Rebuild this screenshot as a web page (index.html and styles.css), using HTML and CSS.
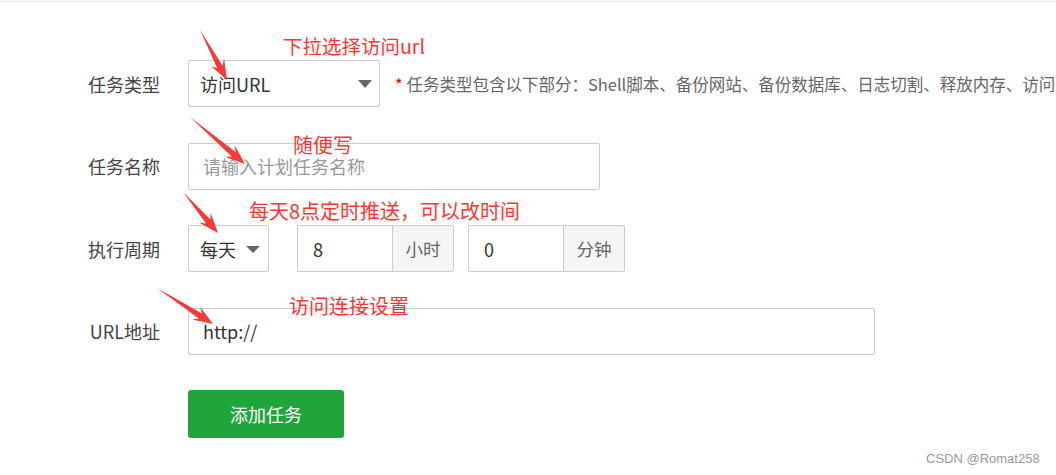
FILE: index.html
```html
<!DOCTYPE html>
<html lang="zh-CN">
<head>
<meta charset="utf-8">
<title>添加计划任务</title>
<link rel="stylesheet" href="styles.css">
</head>
<body>
<div class="topline"></div>
<div class="form">
  <div class="row">
    <label class="lbl">任务类型</label>
    <div class="select w-type"><span>访问URL</span><i class="caret"></i></div>
    <span class="hint"><em>*</em> 任务类型包含以下部分：Shell脚本、备份网站、备份数据库、日志切割、释放内存、访问</span>
  </div>
  <div class="row">
    <label class="lbl">任务名称</label>
    <input class="text w-name" type="text" placeholder="请输入计划任务名称">
  </div>
  <div class="row">
    <label class="lbl">执行周期</label>
    <div class="select w-cycle"><span>每天</span><i class="caret small"></i></div>
    <div class="ig first"><input class="num" type="text" value="8"><span class="addon">小时</span></div>
    <div class="ig"><input class="num" type="text" value="0"><span class="addon">分钟</span></div>
  </div>
  <div class="row">
    <label class="lbl">URL地址</label>
    <input class="text w-url" type="text" value="http://">
  </div>
  <div class="row">
    <span class="lbl"></span>
    <button class="btn" type="button">添加任务</button>
  </div>
</div>

<svg class="arrows" width="1056" height="475" viewBox="0 0 1056 475">
  <polygon points="200,30 217.2,68.2 210.9,66.0 227,80 224.1,58.8 222.5,65.4"/>
  <polygon points="190,117 231.7,156.5 224.9,156.7 245,164 234.7,145.3 235.6,152.0"/>
  <polygon points="183,192 206.0,223.5 199.3,222.7 218,233 210.7,212.9 210.5,219.6"/>
  <polygon points="157,288 198.8,318.4 192.1,319.5 213,324 200.2,306.9 202.0,313.4"/>
</svg>
<div class="note n1">下拉选择访问url</div>
<div class="note n2">随便写</div>
<div class="note n3">每天8点定时推送，可以改时间</div>
<div class="note n4">访问连接设置</div>

<div class="wm">CSDN @Romat258</div>
</body>
</html>
```
FILE: styles.css
```css
html, body {
  margin: 0;
  padding: 0;
}
body {
  position: relative;
  width: 1056px;
  height: 475px;
  overflow: hidden;
  background: #fff;
  font-family: "Noto Sans CJK SC", "Microsoft YaHei", sans-serif;
  color: #333;
}
.topline {
  height: 1px;
  margin-top: 1px;
  background: #e8e8e8;
}
.form {
  padding-top: 58px;
}
.row {
  display: flex;
  align-items: center;
  height: 47px;
  margin-bottom: 35.5px;
  white-space: nowrap;
}
.lbl {
  flex: none;
  box-sizing: border-box;
  width: 188px;
  padding-right: 28px;
  text-align: right;
  font-size: 18px;
  line-height: 24px;
  color: #444;
}
.select {
  flex: none;
  box-sizing: border-box;
  height: 47px;
  display: flex;
  align-items: center;
  justify-content: space-between;
  border: 1px solid #ccc;
  border-radius: 2px;
  padding: 0 7px 0 11px;
  font-size: 18px;
  color: #333;
}
.w-type { width: 192px; }
.w-cycle { width: 81px; padding-right: 8px; }
.caret {
  width: 0;
  height: 0;
  border-left: 7.5px solid transparent;
  border-right: 7.5px solid transparent;
  border-top: 8px solid #666;
}
.caret.small {
  border-top-width: 7px;
  margin-top: 2px;
}
.hint {
  flex: none;
  margin-left: 15px;
  font-size: 16.5px;
  color: #666;
}
.hint em {
  font-style: normal;
  color: #e00;
}
.text {
  flex: none;
  box-sizing: border-box;
  height: 47px;
  border: 1px solid #ccc;
  border-radius: 2px;
  padding: 0 0 0 14px;
  font-family: inherit;
  font-size: 18px;
  color: #333;
  outline: none;
}
.text::placeholder { color: #999; }
.w-name { width: 412px; }
.w-url { width: 687px; }
.ig {
  flex: none;
  display: flex;
  height: 47px;
  margin-left: 14px;
}
.ig.first { margin-left: 28px; }
.num {
  box-sizing: border-box;
  width: 95px;
  height: 47px;
  border: 1px solid #ccc;
  border-right: 0;
  border-radius: 2px 0 0 2px;
  padding: 0 0 0 15px;
  font-family: inherit;
  font-size: 18px;
  color: #333;
  outline: none;
}
.addon {
  box-sizing: border-box;
  width: 62px;
  height: 47px;
  display: flex;
  align-items: center;
  justify-content: center;
  border: 1px solid #ccc;
  border-radius: 0 2px 2px 0;
  background: #f5f5f5;
  font-size: 17.5px;
  color: #666;
}
.btn {
  flex: none;
  box-sizing: border-box;
  width: 156px;
  height: 48px;
  border: 0;
  border-radius: 3px;
  background: #20a53a;
  color: #fff;
  font-family: inherit;
  font-size: 18px;
  padding: 0;
}
.arrows {
  position: absolute;
  left: 0;
  top: 0;
  pointer-events: none;
}
.arrows polygon {
  fill: #f53a3a;
}
.note {
  position: absolute;
  font-size: 20px;
  line-height: 20px;
  color: #ff3434;
  white-space: nowrap;
}
.n1 { left: 283px; top: 36px; font-size: 19.5px; }
.n2 { left: 293px; top: 135px; }
.n3 { left: 249px; top: 201px; }
.n4 { left: 289px; top: 296px; }
.wm {
  position: absolute;
  left: 926px;
  top: 451px;
  font-family: "Liberation Sans", Arial, sans-serif;
  font-size: 13px;
  line-height: 16px;
  color: #999;
}
```
